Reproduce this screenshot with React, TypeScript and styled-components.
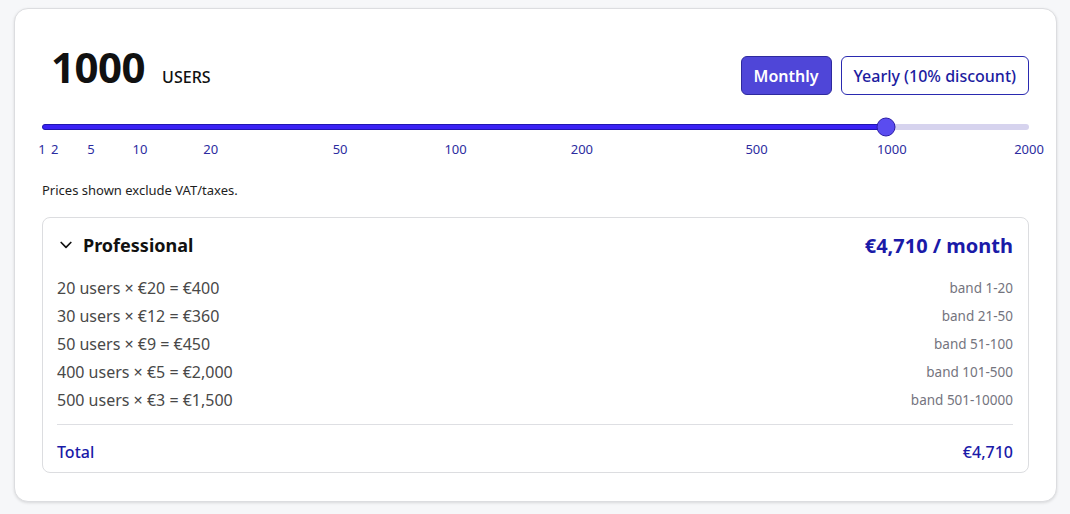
import styled, { createGlobalStyle } from 'styled-components';

const ticks = [
	{ label: '1', pos: 0 },
	{ label: '2', pos: 0.013 },
	{ label: '5', pos: 0.0496 },
	{ label: '10', pos: 0.0993 },
	{ label: '20', pos: 0.171 },
	{ label: '50', pos: 0.302 },
	{ label: '100', pos: 0.419 },
	{ label: '200', pos: 0.547 },
	{ label: '500', pos: 0.724 },
	{ label: '1000', pos: 0.861 },
	{ label: '2000', pos: 1 },
];

const bands = [
	{ text: '20 users × €20 = €400', band: 'band 1-20' },
	{ text: '30 users × €12 = €360', band: 'band 21-50' },
	{ text: '50 users × €9 = €450', band: 'band 51-100' },
	{ text: '400 users × €5 = €2,000', band: 'band 101-500' },
	{ text: '500 users × €3 = €1,500', band: 'band 501-10000' },
];

const thumbPos = 0.855;

function App() {
	return (
		<>
			<GlobalStyle />
			<StyledPage>
				<StyledCard>
					<StyledTop>
						<StyledCount>
							<StyledNumber>1000</StyledNumber>
							<StyledUnit>USERS</StyledUnit>
						</StyledCount>
						<StyledToggle>
							<StyledPeriodButton $active>Monthly</StyledPeriodButton>
							<StyledPeriodButton>Yearly (10% discount)</StyledPeriodButton>
						</StyledToggle>
					</StyledTop>

					<StyledSlider>
						<StyledTrack>
							<StyledFill style={{ width: `${thumbPos * 100}%` }} />
							<StyledThumb style={{ left: `${thumbPos * 100}%` }} />
						</StyledTrack>
						<StyledTicks>
							{ticks.map((t) => (
								<StyledTick key={t.label} style={{ left: `${t.pos * 100}%` }}>
									{t.label}
								</StyledTick>
							))}
						</StyledTicks>
					</StyledSlider>

					<StyledNote>Prices shown exclude VAT/taxes.</StyledNote>

					<StyledPlan>
						<StyledPlanHeader>
							<StyledPlanName>
								<svg width='12' height='8' viewBox='0 0 12 8' fill='none'>
									<path
										d='M1.2 1.5 6 6.3l4.8-4.8'
										stroke='#111'
										strokeWidth='1.7'
										strokeLinecap='round'
										strokeLinejoin='round'
									/>
								</svg>
								Professional
							</StyledPlanName>
							<StyledPlanPrice>€4,710 / month</StyledPlanPrice>
						</StyledPlanHeader>
						<StyledRows>
							{bands.map((b) => (
								<StyledRow key={b.band}>
									<span>{b.text}</span>
									<StyledBand>{b.band}</StyledBand>
								</StyledRow>
							))}
						</StyledRows>
						<StyledTotal>
							<span>Total</span>
							<span>€4,710</span>
						</StyledTotal>
					</StyledPlan>
				</StyledCard>
			</StyledPage>
		</>
	);
}

const GlobalStyle = createGlobalStyle`
	* {
		box-sizing: border-box;
	}
	body {
		margin: 0;
		background: #f6f7f9;
		font-family: 'Segoe UI', 'Noto Sans', 'Liberation Sans', sans-serif;
		color: #111;
	}
`;

const StyledPage = styled.main`
	padding: 8px 13px 13px 14px;
`;

const StyledCard = styled.section`
	background: #fff;
	border: 1px solid #dcdde0;
	border-radius: 14px;
	box-shadow: 0 1px 3px rgba(0, 0, 0, 0.12);
	padding: 28px 27px 28px 27px;
	display: flex;
	flex-direction: column;
`;

const StyledTop = styled.div`
	display: flex;
	justify-content: space-between;
	align-items: flex-start;
	padding-top: 9px;
`;

const StyledCount = styled.div`
	display: flex;
	align-items: baseline;
	gap: 17px;
	padding-left: 9px;
`;

const StyledNumber = styled.span`
	font-size: 42px;
	font-weight: 700;
	line-height: 1;
	letter-spacing: -0.5px;
`;

const StyledUnit = styled.span`
	font-size: 16px;
	font-weight: 500;
`;

const StyledToggle = styled.div`
	display: flex;
	gap: 9px;
	margin-top: 10px;
`;

const StyledPeriodButton = styled.button<{ $active?: boolean }>`
	font-family: inherit;
	font-size: 16px;
	height: 39px;
	padding: 0 12px;
	border-radius: 6px;
	cursor: pointer;
	border: 1px solid ${({ $active }) => ($active ? '#2e2a9e' : '#2a2ab0')};
	background: ${({ $active }) => ($active ? '#4f46d8' : '#fff')};
	color: ${({ $active }) => ($active ? '#fff' : '#1c1ca0')};
	font-weight: ${({ $active }) => ($active ? 600 : 500)};
`;

const StyledSlider = styled.div`
	margin-top: 29px;
	display: flex;
	flex-direction: column;
`;

const StyledTrack = styled.div`
	position: relative;
	height: 6px;
	border-radius: 3px;
	background: #d6d3ee;
`;

const StyledFill = styled.div`
	height: 100%;
	border-radius: 3px;
	background: #3a22f5;
	border: 1px solid #2016b0;
`;

const StyledThumb = styled.div`
	position: absolute;
	top: 50%;
	width: 19px;
	height: 19px;
	border-radius: 50%;
	background: #5a4cf0;
	border: 1.5px solid #2a1ca8;
	transform: translate(-50%, -50%);
`;

const StyledTicks = styled.div`
	position: relative;
	height: 24px;
	margin-top: 10px;
`;

const StyledTick = styled.span`
	position: absolute;
	top: 0;
	transform: translateX(-50%);
	font-size: 13px;
	color: #2c2ca0;
	white-space: nowrap;
`;

const StyledNote = styled.p`
	margin: 17px 0 0;
	font-size: 13px;
	color: #1e1e1e;
`;

const StyledPlan = styled.div`
	margin-top: 18px;
	border: 1px solid #dcdde0;
	border-radius: 8px;
	padding: 12px 15px 0 14px;
	display: flex;
	flex-direction: column;
`;

const StyledPlanHeader = styled.div`
	display: flex;
	justify-content: space-between;
	align-items: center;
	height: 30px;
`;

const StyledPlanName = styled.h3`
	margin: 0;
	display: flex;
	align-items: center;
	gap: 11px;
	padding-left: 3px;
	font-size: 18px;
	font-weight: 700;
`;

const StyledPlanPrice = styled.span`
	font-size: 20px;
	font-weight: 700;
	color: #1a1aa8;
`;

const StyledRows = styled.div`
	margin-top: 14px;
	display: flex;
	flex-direction: column;
	padding-bottom: 10px;
	border-bottom: 1px solid #dedfe3;
`;

const StyledRow = styled.div`
	display: flex;
	justify-content: space-between;
	align-items: center;
	height: 28px;
	font-size: 16px;
	color: #484848;
`;

const StyledBand = styled.span`
	font-size: 13.5px;
	color: #74747e;
`;

const StyledTotal = styled.div`
	display: flex;
	justify-content: space-between;
	align-items: center;
	height: 40px;
	margin-top: 7px;
	font-size: 16px;
	font-weight: 500;
	color: #1a1aa8;
`;

export default App;
